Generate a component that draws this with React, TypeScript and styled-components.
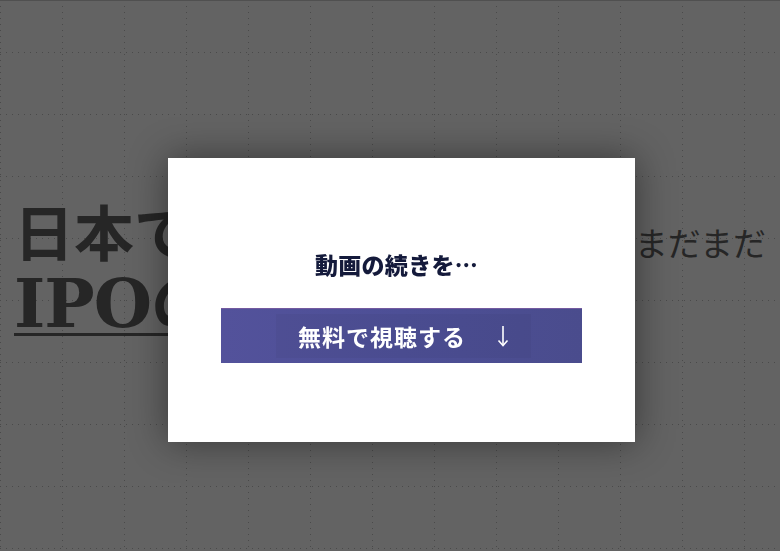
import React from "react";
import styled, { createGlobalStyle } from "styled-components";

const GlobalStyle = createGlobalStyle`
  html, body {
    margin: 0;
    padding: 0;
    width: 100%;
    height: 100%;
  }
  body {
    background-color: #636363;
    background-image:
      conic-gradient(from 270deg at 1px 1px, #4a4a4a 90deg, transparent 0),
      conic-gradient(from 270deg at 1px 1px, #4a4a4a 90deg, transparent 0);
    background-size: 62px 6px, 6px 62px;
    background-position: 0 0, 0 52px;
    font-family: "Noto Sans CJK JP", "Noto Sans", sans-serif;
    overflow: hidden;
  }
`;

const Page = styled.main`
  height: 551px;
  border-top: 1px solid #505050;
  box-sizing: border-box;
  padding-top: 199px;
`;

const HeadRow = styled.div`
  display: flex;
  align-items: baseline;
  justify-content: space-between;
  padding: 0 14px 0 14px;
  color: #262626;
  line-height: 1;
`;

const BigText = styled.span`
  display: inline-block;
  line-height: 1;
  font-size: 60px;
  font-weight: 700;
`;

const SmallText = styled.span`
  display: inline-block;
  line-height: 1;
  font-size: 33px;
  font-weight: 400;
`;

const SubRow = styled.div`
  padding: 10px 14px 0;
  color: #262626;
  line-height: 1;
`;

const Underlined = styled.span`
  display: inline-block;
  line-height: 1;
  font-family: "DejaVu Serif", "Noto Sans CJK JP", serif;
  font-size: 67px;
  font-weight: 700;
  letter-spacing: -1px;
  text-decoration: underline;
  text-decoration-thickness: 3px;
  text-underline-offset: 6px;
`;

const Overlay = styled.div`
  position: fixed;
  inset: 0;
`;

const Modal = styled.section`
  position: absolute;
  left: 168px;
  top: 158px;
  width: 467px;
  height: 284px;
  box-sizing: border-box;
  background: #ffffff;
  box-shadow: 0 0 36px rgba(0, 0, 0, 0.45);
  display: flex;
  flex-direction: column;
  align-items: center;
  padding-top: 90px;
  gap: 27px;
`;

const Title = styled.h2`
  margin: 0 10px 0 0;
  height: 33px;
  line-height: 33px;
  font-size: 23px;
  font-weight: 900;
  letter-spacing: 0.3px;
  color: #141a3b;
`;

const CtaButton = styled.button`
  width: 361px;
  height: 55px;
  border: none;
  border-top: 1px solid #735aa0;
  background: linear-gradient(90deg, #53529b 0%, #4d4f96 50%, #4a4c8d 100%);
  display: flex;
  align-items: center;
  justify-content: center;
  padding: 0 0 0 4px;
  cursor: pointer;
  font-family: "Noto Sans CJK JP", "Noto Sans", sans-serif;
`;

const CtaInner = styled.span`
  display: flex;
  align-items: center;
  gap: 31px;
  padding: 6px 22px;
  background: rgba(60, 60, 110, 0.12);
  color: #ffffff;
`;

const CtaLabel = styled.span`
  font-size: 23px;
  font-weight: 700;
  letter-spacing: 1px;
  line-height: 32px;
`;

const Arrow = styled.svg`
  width: 12px;
  height: 22px;
  display: block;
`;

export default function App() {
  return (
    <>
      <GlobalStyle />
      <Page>
        <HeadRow>
          <BigText>日本で</BigText>
          <SmallText>まだまだ</SmallText>
        </HeadRow>
        <SubRow>
          <Underlined>IPOの</Underlined>
        </SubRow>
      </Page>
      <Overlay>
        <Modal>
          <Title>動画の続きを…</Title>
          <CtaButton type="button">
            <CtaInner>
              <CtaLabel>無料で視聴する</CtaLabel>
              <Arrow viewBox="0 0 12 22" fill="none" stroke="#ffffff" strokeWidth="1.6">
                <path d="M6 1 V20" />
                <path d="M1.5 15.5 L6 20.5 L10.5 15.5" />
              </Arrow>
            </CtaInner>
          </CtaButton>
        </Modal>
      </Overlay>
    </>
  );
}
